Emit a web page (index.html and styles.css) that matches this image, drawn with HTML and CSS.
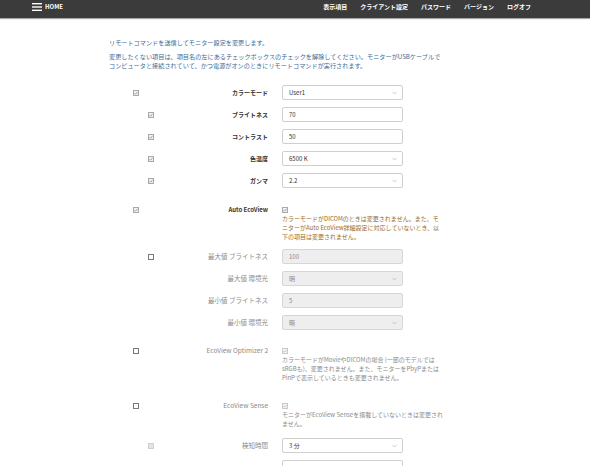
FILE: index.html
```html
<!DOCTYPE html>
<html lang="ja">
<head>
<meta charset="utf-8">
<title>Remote command</title>
<link rel="stylesheet" href="styles.css">
</head>
<body>
<header class="navbar">
  <div class="brand">
    <svg class="burger" viewBox="0 0 10 8" width="10" height="8"><rect x="0" y="0" width="10" height="1.4" fill="#fff"/><rect x="0" y="3.3" width="10" height="1.4" fill="#fff"/><rect x="0" y="6.6" width="10" height="1.4" fill="#fff"/></svg>
    <span>HOME</span>
  </div>
  <nav class="menu">
    <a href="#">表示項目</a>
    <a href="#">クライアント設定</a>
    <a href="#">パスワード</a>
    <a href="#">バージョン</a>
    <a href="#">ログオフ</a>
  </nav>
</header>

<main class="main">
  <p class="intro">リモートコマンドを送信してモニター設定を変更します。</p>
  <p class="intro">変更したくない項目は、項目名の左にあるチェックボックスのチェックを解除してください。モニターがUSBケーブルで<br>コンピュータと接続されていて、かつ電源がオンのときにリモートコマンドが実行されます。</p>

  <div class="form">
    <div class="row r1">
      <div class="lead"><svg class="cb lv1" viewBox="0 0 6 6"><rect x=".5" y=".5" width="5" height="5" fill="#f3f3f3" stroke="#a8a8a8"/><path d="M1.5 3.1 2.6 4.2 4.6 1.8" stroke="#8c8c8c" stroke-width=".8" fill="none"/></svg><span class="label strong">カラーモード</span></div>
      <div class="field select"><span>User1</span><svg class="chev" viewBox="0 0 6 4"><path d="M.6.6 3 3.2 5.4.6" stroke="#aaa" stroke-width=".7" fill="none"/></svg></div>
    </div>
    <div class="row r7">
      <div class="lead"><svg class="cb lv2" viewBox="0 0 6 6"><rect x=".5" y=".5" width="5" height="5" fill="#f3f3f3" stroke="#a8a8a8"/><path d="M1.5 3.1 2.6 4.2 4.6 1.8" stroke="#8c8c8c" stroke-width=".8" fill="none"/></svg><span class="label strong">ブライトネス</span></div>
      <div class="field"><span>70</span></div>
    </div>
    <div class="row r7">
      <div class="lead"><svg class="cb lv2" viewBox="0 0 6 6"><rect x=".5" y=".5" width="5" height="5" fill="#f3f3f3" stroke="#a8a8a8"/><path d="M1.5 3.1 2.6 4.2 4.6 1.8" stroke="#8c8c8c" stroke-width=".8" fill="none"/></svg><span class="label strong">コントラスト</span></div>
      <div class="field"><span>50</span></div>
    </div>
    <div class="row r7">
      <div class="lead"><svg class="cb lv2" viewBox="0 0 6 6"><rect x=".5" y=".5" width="5" height="5" fill="#f3f3f3" stroke="#a8a8a8"/><path d="M1.5 3.1 2.6 4.2 4.6 1.8" stroke="#8c8c8c" stroke-width=".8" fill="none"/></svg><span class="label strong">色温度</span></div>
      <div class="field select"><span>6500 K</span><svg class="chev" viewBox="0 0 6 4"><path d="M.6.6 3 3.2 5.4.6" stroke="#aaa" stroke-width=".7" fill="none"/></svg></div>
    </div>
    <div class="row r7">
      <div class="lead"><svg class="cb lv2" viewBox="0 0 6 6"><rect x=".5" y=".5" width="5" height="5" fill="#f3f3f3" stroke="#a8a8a8"/><path d="M1.5 3.1 2.6 4.2 4.6 1.8" stroke="#8c8c8c" stroke-width=".8" fill="none"/></svg><span class="label strong">ガンマ</span></div>
      <div class="field select"><span>2.2</span><svg class="chev" viewBox="0 0 6 4"><path d="M.6.6 3 3.2 5.4.6" stroke="#aaa" stroke-width=".7" fill="none"/></svg></div>
    </div>

    <div class="row desc r-auto">
      <div class="lead"><svg class="cb lv1" viewBox="0 0 6 6"><rect x=".5" y=".5" width="5" height="5" fill="#f3f3f3" stroke="#a8a8a8"/><path d="M1.5 3.1 2.6 4.2 4.6 1.8" stroke="#8c8c8c" stroke-width=".8" fill="none"/></svg><span class="label strong">Auto EcoView</span></div>
      <div class="ctrl">
        <div class="cbline"><svg class="cb" viewBox="0 0 6 6"><rect x=".5" y=".5" width="5" height="5" fill="#f3f3f3" stroke="#a8a8a8"/><path d="M1.5 3.1 2.6 4.2 4.6 1.8" stroke="#8c8c8c" stroke-width=".8" fill="none"/></svg></div>
        <p class="note warn">カラーモードがDICOMのときは変更されません。また、モ<br>ニターがAuto EcoView詳細設定に対応していないとき、以<br>下の項目は変更されません。</p>
      </div>
    </div>

    <div class="row r-max">
      <div class="lead"><svg class="cb lv2" viewBox="0 0 6 6"><rect x=".5" y=".5" width="5" height="5" fill="#fff" stroke="#7a7a7a"/></svg><span class="label muted">最大値 ブライトネス</span></div>
      <div class="field disabled"><span>100</span></div>
    </div>
    <div class="row r7">
      <div class="lead"><span class="label muted">最大値 環境光</span></div>
      <div class="field select disabled"><span>明</span><svg class="chev" viewBox="0 0 6 4"><path d="M.6.6 3 3.2 5.4.6" stroke="#aaa" stroke-width=".7" fill="none"/></svg></div>
    </div>
    <div class="row r7">
      <div class="lead"><span class="label muted">最小値 ブライトネス</span></div>
      <div class="field disabled"><span>5</span></div>
    </div>
    <div class="row r7">
      <div class="lead"><span class="label muted">最小値 環境光</span></div>
      <div class="field select disabled"><span>暗</span><svg class="chev" viewBox="0 0 6 4"><path d="M.6.6 3 3.2 5.4.6" stroke="#aaa" stroke-width=".7" fill="none"/></svg></div>
    </div>

    <div class="row desc r-opt">
      <div class="lead"><svg class="cb lv1" viewBox="0 0 6 6"><rect x=".5" y=".5" width="5" height="5" fill="#fff" stroke="#7a7a7a"/></svg><span class="label muted">EcoView Optimizer 2</span></div>
      <div class="ctrl">
        <div class="cbline"><svg class="cb" viewBox="0 0 6 6"><rect x=".5" y=".5" width="5" height="5" fill="#f6f6f6" stroke="#c8c8c8"/><path d="M1.5 3.1 2.6 4.2 4.6 1.8" stroke="#b4b4b4" stroke-width=".8" fill="none"/></svg></div>
        <p class="note dim">カラーモードがMovieやDICOMの場合 (一部のモデルでは<br>sRGBも)、変更されません。また、モニターをPbyPまたは<br>PinPで表示しているときも変更されません。</p>
      </div>
    </div>

    <div class="row desc r-sense">
      <div class="lead"><svg class="cb lv1" viewBox="0 0 6 6"><rect x=".5" y=".5" width="5" height="5" fill="#fff" stroke="#7a7a7a"/></svg><span class="label muted">EcoView Sense</span></div>
      <div class="ctrl">
        <div class="cbline"><svg class="cb" viewBox="0 0 6 6"><rect x=".5" y=".5" width="5" height="5" fill="#f6f6f6" stroke="#c8c8c8"/><path d="M1.5 3.1 2.6 4.2 4.6 1.8" stroke="#b4b4b4" stroke-width=".8" fill="none"/></svg></div>
        <p class="note dim">モニターがEcoView Senseを搭載していないときは変更され<br>ません。</p>
      </div>
    </div>

    <div class="row r-detect">
      <div class="lead"><svg class="cb lv2" viewBox="0 0 6 6"><rect x=".5" y=".5" width="5" height="5" fill="#e4e4e4" stroke="#cfcfcf"/></svg><span class="label muted">検知時間</span></div>
      <div class="field select"><span>3 分</span><svg class="chev" viewBox="0 0 6 4"><path d="M.6.6 3 3.2 5.4.6" stroke="#aaa" stroke-width=".7" fill="none"/></svg></div>
    </div>
    <div class="row r7">
      <div class="lead"><span class="label muted">&nbsp;</span></div>
      <div class="field"><span>&nbsp;</span></div>
    </div>
  </div>
</main>
</body>
</html>
```

FILE: styles.css
```css
html, body {
  margin: 0;
  padding: 0;
  background: #fff;
}

body {
  font-family: "Noto Sans CJK JP", "Noto Sans", sans-serif;
  font-size: 6px;
  line-height: 9px;
  color: #333;
  overflow: hidden;
}

/* ---------- top bar ---------- */
.navbar {
  height: 18px;
  background: #3b3b3b;
  box-shadow: 0 1px 1px rgba(0, 0, 0, 0.35);
  display: flex;
  justify-content: space-between;
  align-items: flex-start;
  padding: 0 59px 0 32px;
  box-sizing: border-box;
}

.brand {
  display: flex;
  align-items: center;
  gap: 3px;
  height: 13px;
  color: #fff;
  font-weight: bold;
}

.burger {
  display: block;
}

.menu {
  display: flex;
  align-items: center;
  gap: 13px;
  height: 12px;
}

.menu a {
  color: #fff;
  font-weight: bold;
  text-decoration: none;
}

/* ---------- content ---------- */
.main {
  padding: 20px 0 0 109px;
}

.intro {
  margin: 0;
  font-size: 6.17px;
  color: #3d6a96;
}

.intro + .intro {
  margin-top: 5px;
}

.form {
  display: flex;
  flex-direction: column;
  margin-top: 15px;
}

.row {
  display: flex;
  align-items: center;
}

.r7 { margin-top: 7px; }
.r-auto { margin-top: 17px; }
.r-max { margin-top: 8px; }
.r-opt { margin-top: 16px; }
.r-sense { margin-top: 19px; }
.r-detect { margin-top: 10px; }

.row.desc {
  align-items: flex-start;
}

.lead {
  width: 159px;
  height: 9px;
  display: flex;
  align-items: center;
  flex-shrink: 0;
}

.label {
  flex: 1;
  text-align: right;
  white-space: nowrap;
}

.label.strong {
  font-weight: bold;
  color: #333;
}

.label.muted {
  font-size: 6.5px;
  color: #8a8a8a;
}

.cb {
  display: block;
  width: 6px;
  height: 6px;
  flex-shrink: 0;
}

.cb.lv1 { margin-left: 24px; }
.cb.lv2 { margin-left: 39px; }

/* inputs & selects */
.field {
  margin-left: 14px;
  width: 121px;
  height: 15px;
  box-sizing: border-box;
  border: 1px solid #cfcfcf;
  border-radius: 2px;
  background: #fff;
  padding: 0 5px 0 6px;
  display: flex;
  align-items: center;
  justify-content: space-between;
  color: #333;
}

.field.disabled {
  background: #eeeeee;
  border-color: #d6d6d6;
  color: #8a8a8a;
}

.chev {
  display: block;
  width: 5px;
  height: 4px;
}

/* checkbox + note control */
.ctrl {
  margin-left: 14px;
  width: 172px;
}

.cbline {
  height: 9px;
  display: flex;
  align-items: center;
}

.note {
  margin: 0;
  white-space: nowrap;
}

.note.warn {
  color: #9b6a26;
}

.note.dim {
  color: #8a8a8a;
}
```
